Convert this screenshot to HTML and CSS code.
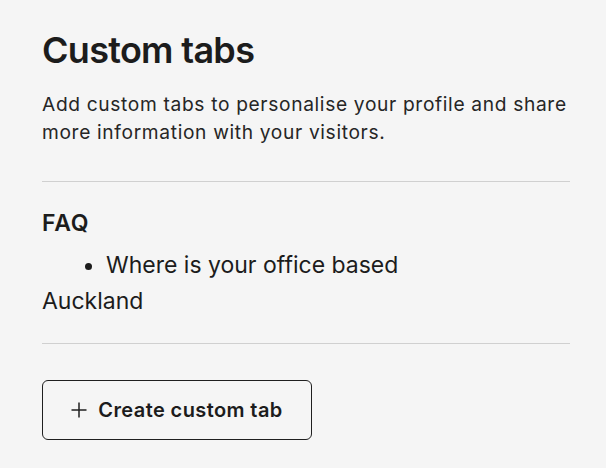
FILE: index.html
```html
<!DOCTYPE html>
<html lang="en">
<head>
<meta charset="utf-8">
<link rel="stylesheet" href="styles.css">
</head>
<body>
<main class="panel">
  <h1 class="title">Custom tabs</h1>
  <p class="intro">Add custom tabs to personalise your profile and share more information with your visitors.</p>
  <hr class="divider">
  <section class="tab">
    <h2 class="tab-name">FAQ</h2>
    <ul class="tab-list">
      <li>Where is your office based</li>
    </ul>
    <p class="tab-text">Auckland</p>
  </section>
  <hr class="divider divider-end">
  <button class="create-btn" type="button">
    <svg class="plus" width="16" height="16" viewBox="0 0 16 16" aria-hidden="true"><path d="M8 0.5v15M0.5 8h15" stroke="#1f1f1f" stroke-width="1.5" fill="none"/></svg>
    <span>Create custom tab</span>
  </button>
</main>
</body>
</html>
```
FILE: styles.css
```css
html, body {
  margin: 0;
  padding: 0;
  background: #f5f5f5;
}
body {
  font-family: Inter, "Noto Sans", sans-serif;
  color: #1c1c1c;
}
.panel {
  padding: 28px 36px 0 42px;
  display: flex;
  flex-direction: column;
  align-items: flex-start;
}
.title {
  margin: 0;
  font-size: 36px;
  font-weight: 600;
  line-height: 44px;
  letter-spacing: -0.7px;
}
.intro {
  margin: 18px 0 0;
  font-size: 19.2px;
  line-height: 28px;
  font-weight: 400;
  letter-spacing: 0.65px;
  color: #262626;
}
.divider {
  align-self: stretch;
  border: 0;
  border-top: 1px solid #d0d0d0;
  margin: 35px 0 0;
}
.tab {
  padding-top: 26px;
}
.tab-name {
  margin: 0;
  font-size: 23px;
  font-weight: 600;
  line-height: 30px;
  letter-spacing: 0.8px;
}
.tab-list {
  margin: 11px 0 0;
  padding-left: 64px;
  font-size: 23px;
  line-height: 32px;
}
.tab-text {
  margin: 4px 0 0;
  font-size: 23px;
  line-height: 32px;
}
.divider-end {
  margin-top: 26px;
}
.create-btn {
  margin-top: 36px;
  width: 270px;
  height: 60px;
  display: flex;
  align-items: center;
  justify-content: center;
  gap: 11px;
  border: 1px solid #1f1f1f;
  border-radius: 6px;
  background: transparent;
  font-family: inherit;
  font-size: 20px;
  font-weight: 600;
  letter-spacing: 0.4px;
  color: #1c1c1c;
  padding: 0 0 1px;
}
```
